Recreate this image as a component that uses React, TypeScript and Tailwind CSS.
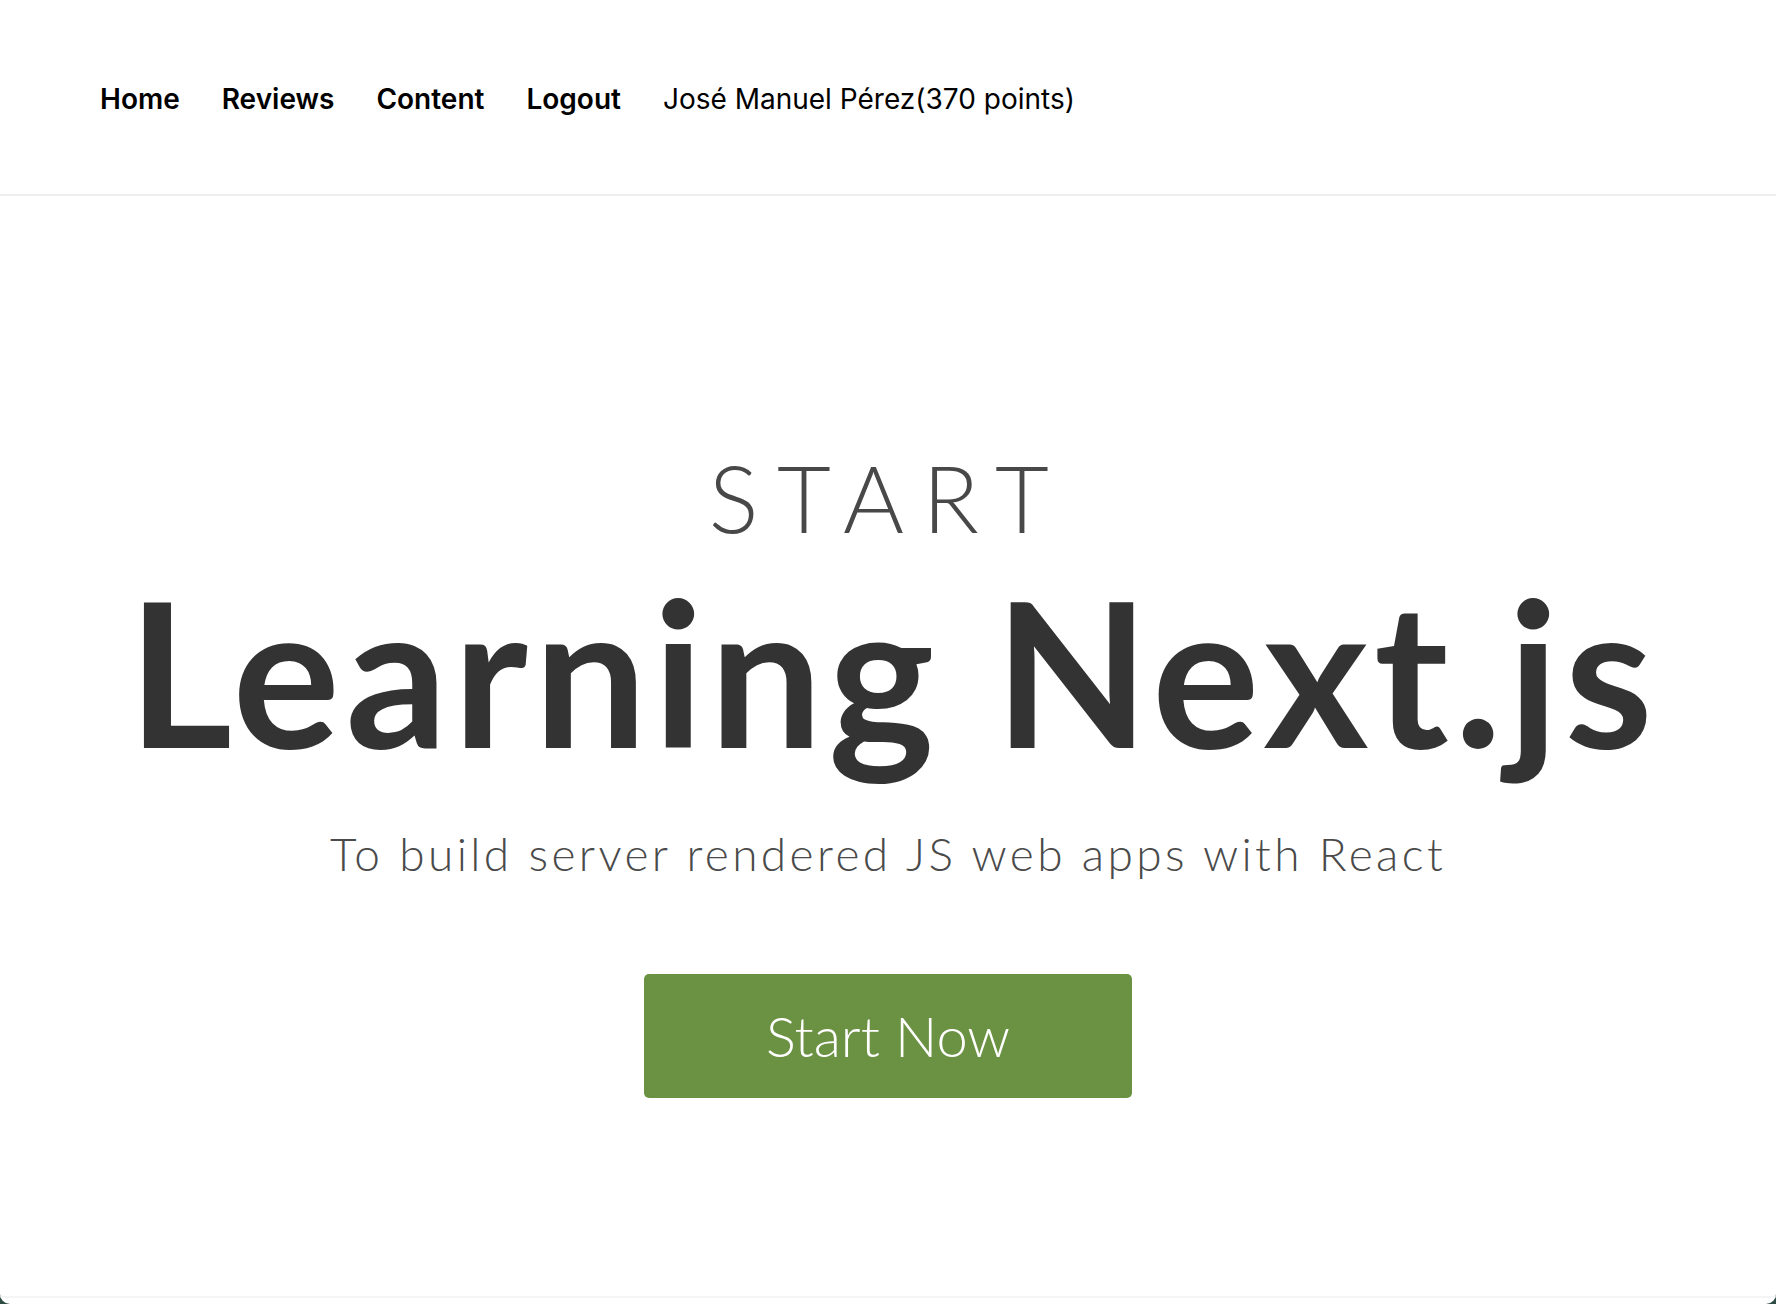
import React from "react";

export default function App() {
  const navFont = { fontFamily: "Inter, 'Liberation Sans', sans-serif" };
  const heroFont = { fontFamily: "Lato, 'Noto Sans', sans-serif" };
  return (
    <div className="w-[1776px] h-[1304px] bg-[#2f4c44]">
      <div className="w-full h-full bg-white rounded-b-[10px] flex flex-col overflow-hidden">
        <header className="h-[196px] border-b-2 border-[#eeeeee] pt-[85px] pl-[100px]" style={navFont}>
          <nav className="flex items-start gap-[42px] text-[28px] leading-none text-black">
            <a className="font-semibold">Home</a>
            <a className="font-semibold">Reviews</a>
            <a className="font-semibold">Content</a>
            <a className="font-semibold">Logout</a>
            <span className="font-normal">José Manuel Pérez(370 points)</span>
          </nav>
        </header>
        <main className="flex-1 flex flex-col items-center pt-[255px]" style={heroFont}>
          <div className="text-[93px] leading-none font-light tracking-[0.2em] text-[#484848]">
            START
          </div>
          <h1 className="mt-[26px] pl-[10px] text-[201px] leading-none font-bold text-[#333333] tracking-[0.028em]">
            Learning Next.js
          </h1>
          <p className="mt-[60px] text-[46px] leading-none font-light text-[#4a4a4a] tracking-[0.074em]">
            To build server rendered JS web apps with React
          </p>
          <button className="mt-[97px] w-[488px] h-[124px] rounded-[5px] bg-[#6b9243] text-white text-[56px] leading-none font-light flex items-center justify-center">
            Start Now
          </button>
        </main>
        <div className="h-[8px] border-t-2 border-[#f5f5f5]" />
      </div>
    </div>
  );
}
